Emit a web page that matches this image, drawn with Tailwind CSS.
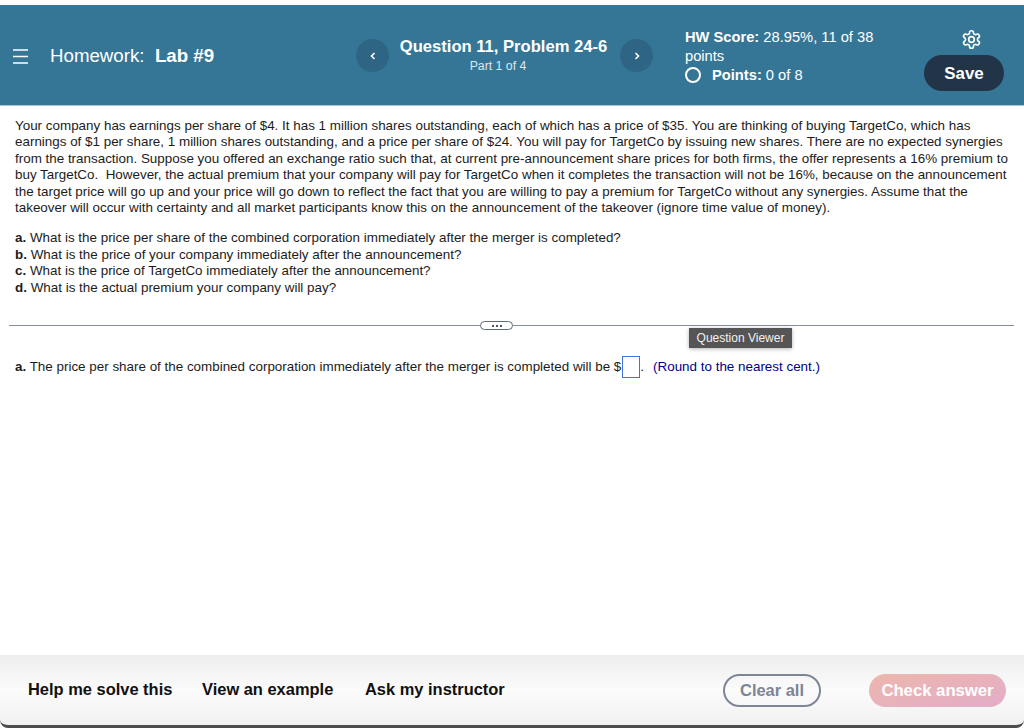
<!doctype html>
<html><head><meta charset="utf-8"><script src="https://cdn.jsdelivr.net/npm/@tailwindcss/browser@4"></script></head>
<body class="bg-white">
<div class="w-[1024px] h-[728px] flex flex-col overflow-hidden bg-white font-['Liberation_Sans',Arial,sans-serif] text-[#1c1c1c]">
  <div class="h-[5px] shrink-0"></div>
  <header class="h-[101px] shrink-0 bg-[#357697] border-b border-[#a9c4d3] flex items-center text-white relative">
    <div class="w-[356px] pl-[13px] pt-[3px] flex items-center shrink-0">
      <svg width="16" height="15" viewBox="0 0 16 15" fill="none" stroke="#fff" stroke-width="1.3"><path d="M0 1H15M0 7.5H15M0 14H15"/></svg>
      <span class="ml-[21px] text-[18.7px] leading-none whitespace-pre">Homework:  <b>Lab #9</b></span>
    </div>
    <div class="w-[33px] h-[33px] mt-[1px] rounded-full bg-[#2e6585] flex items-center justify-center shrink-0">
      <svg width="8" height="10" viewBox="0 0 8 10" fill="none" stroke="#fff" stroke-width="1.6"><path d="M5.5 2 2.5 5l3 3"/></svg>
    </div>
    <div class="w-[231px] pr-[2px] shrink-0 text-center">
      <div class="font-bold text-[16.6px] leading-[20px]">Question 11, Problem 24-6</div>
      <div class="text-[12.3px] leading-[14px] mt-[2px] pr-[11px] text-[#dbe7ee]">Part 1 of 4</div>
    </div>
    <div class="w-[33px] h-[33px] mt-[1px] rounded-full bg-[#2e6585] flex items-center justify-center shrink-0">
      <svg width="8" height="10" viewBox="0 0 8 10" fill="none" stroke="#fff" stroke-width="1.6"><path d="M2.5 2 5.5 5l-3 3"/></svg>
    </div>
    <div class="ml-[32px] w-[239px] shrink-0 pt-[2px] text-[14.7px] leading-[19px]">
      <div><b>HW Score:</b> 28.95%, 11 of 38</div>
      <div>points</div>
      <div class="flex items-center">
        <span class="w-[16px] h-[16px] rounded-full border-2 border-white shrink-0"></span>
        <span class="ml-[11px]"><b>Points:</b> 0 of 8</span>
      </div>
    </div>
    <div class="w-[80px] shrink-0 flex flex-col items-center pt-[10px]">
      <svg class="ml-[14px]" width="21" height="21" viewBox="0 0 24 24" fill="none" stroke="#fff" stroke-width="1.9" stroke-linecap="round" stroke-linejoin="round"><path d="M12.22 2h-.44a2 2 0 0 0-2 2v.18a2 2 0 0 1-1 1.73l-.43.25a2 2 0 0 1-2 0l-.15-.08a2 2 0 0 0-2.73.73l-.22.38a2 2 0 0 0 .73 2.73l.15.1a2 2 0 0 1 1 1.72v.51a2 2 0 0 1-1 1.74l-.15.09a2 2 0 0 0-.73 2.73l.22.38a2 2 0 0 0 2.73.73l.15-.08a2 2 0 0 1 2 0l.43.25a2 2 0 0 1 1 1.73V20a2 2 0 0 0 2 2h.44a2 2 0 0 0 2-2v-.18a2 2 0 0 1 1-1.73l.43-.25a2 2 0 0 1 2 0l.15.08a2 2 0 0 0 2.73-.73l.22-.39a2 2 0 0 0-.73-2.73l-.15-.08a2 2 0 0 1-1-1.74v-.5a2 2 0 0 1 1-1.74l.15-.09a2 2 0 0 0 .73-2.73l-.22-.38a2 2 0 0 0-2.73-.73l-.15.08a2 2 0 0 1-2 0l-.43-.25a2 2 0 0 1-1-1.73V4a2 2 0 0 0-2-2z"/><circle cx="12" cy="12" r="3.2"/></svg>
      <div class="mt-[5px] w-[80px] h-[36px] pt-[1px] rounded-full bg-[#223548] flex items-center justify-center font-bold text-[16.9px]">Save</div>
    </div>
  </header>
  <main class="flex-1 relative">
    <div class="pl-[15px] pr-[12px] pt-[12px] text-[13.42px] leading-[16.4px]">
      <p class="whitespace-nowrap">Your company has earnings per share of $4. It has 1 million shares outstanding, each of which has a price of $35. You are thinking of buying TargetCo, which has<br>earnings of $1 per share, 1 million shares outstanding, and a price per share of $24. You will pay for TargetCo by issuing new shares. There are no expected synergies<br>from the transaction. Suppose you offered an exchange ratio such that, at current pre-announcement share prices for both firms, the offer represents a 16% premium to<br>buy TargetCo.&nbsp; However, the actual premium that your company will pay for TargetCo when it completes the transaction will not be 16%, because on the announcement<br>the target price will go up and your price will go down to reflect the fact that you are willing to pay a premium for TargetCo without any synergies. Assume that the<br>takeover will occur with certainty and all market participants know this on the announcement of the takeover (ignore time value of money).</p>
      <ul class="mt-[14px]">
        <li><b>a.</b> What is the price per share of the combined corporation immediately after the merger is completed?</li>
        <li><b>b.</b> What is the price of your company immediately after the announcement?</li>
        <li><b>c.</b> What is the price of TargetCo immediately after the announcement?</li>
        <li><b>d.</b> What is the actual premium your company will pay?</li>
      </ul>
    </div>
    <div class="relative mt-[29px] ml-[9px] mr-[10px] h-[1px] bg-[#868e9c]">
      <div class="absolute left-[471px] top-[-4px] w-[33px] h-[9px] rounded-full border border-[#5e6a7d] bg-white flex items-center justify-center gap-[2px]">
        <span class="w-[2px] h-[2px] bg-[#4c5668]"></span><span class="w-[2px] h-[2px] bg-[#4c5668]"></span><span class="w-[2px] h-[2px] bg-[#4c5668]"></span>
      </div>
      <div class="absolute left-[680px] top-[3px] w-[103px] h-[20px] bg-[#555] text-[#f2f2f2] text-[12px] flex items-center justify-center shadow-[0_1px_4px_rgba(0,0,0,0.3)]">Question Viewer</div>
    </div>
    <div class="pl-[15px] mt-[30px] h-[22px] flex items-center text-[13.42px] whitespace-pre">
      <span><b>a.</b> The price per share of the combined corporation immediately after the merger is completed will be $</span>
      <span class="ml-[1px] w-[18px] h-[22px] border border-[#4472d8] bg-white"></span>
      <span>.</span><span class="ml-[9px] text-[#00008b]">(Round to the nearest cent.)</span>
    </div>
  </main>
  <footer class="h-[73px] shrink-0 border-b-[3px] border-[#4d4d4d] rounded-b-[8px] bg-gradient-to-b from-[#eeeeee] via-[#fbfbfb] to-[#f1f1f1] flex items-center font-bold text-[16.45px] text-[#111]">
    <div class="ml-[28px] w-[174px] pb-[2px] shrink-0">Help me solve this</div>
    <div class="w-[163px] pb-[2px] shrink-0">View an example</div>
    <div class="w-[358px] pb-[2px] shrink-0">Ask my instructor</div>
    <div class="w-[98px] h-[33px] rounded-full border-2 border-[#7d8596] text-[#7d8596] flex items-center justify-center shrink-0">Clear all</div>
    <div class="ml-[48px] w-[137px] h-[33px] pt-[1px] rounded-full bg-gradient-to-br from-[#edb6ac] to-[#e3adca] text-white text-[16.7px] flex items-center justify-center shrink-0">Check answer</div>
  </footer>
</div>
</body></html>
